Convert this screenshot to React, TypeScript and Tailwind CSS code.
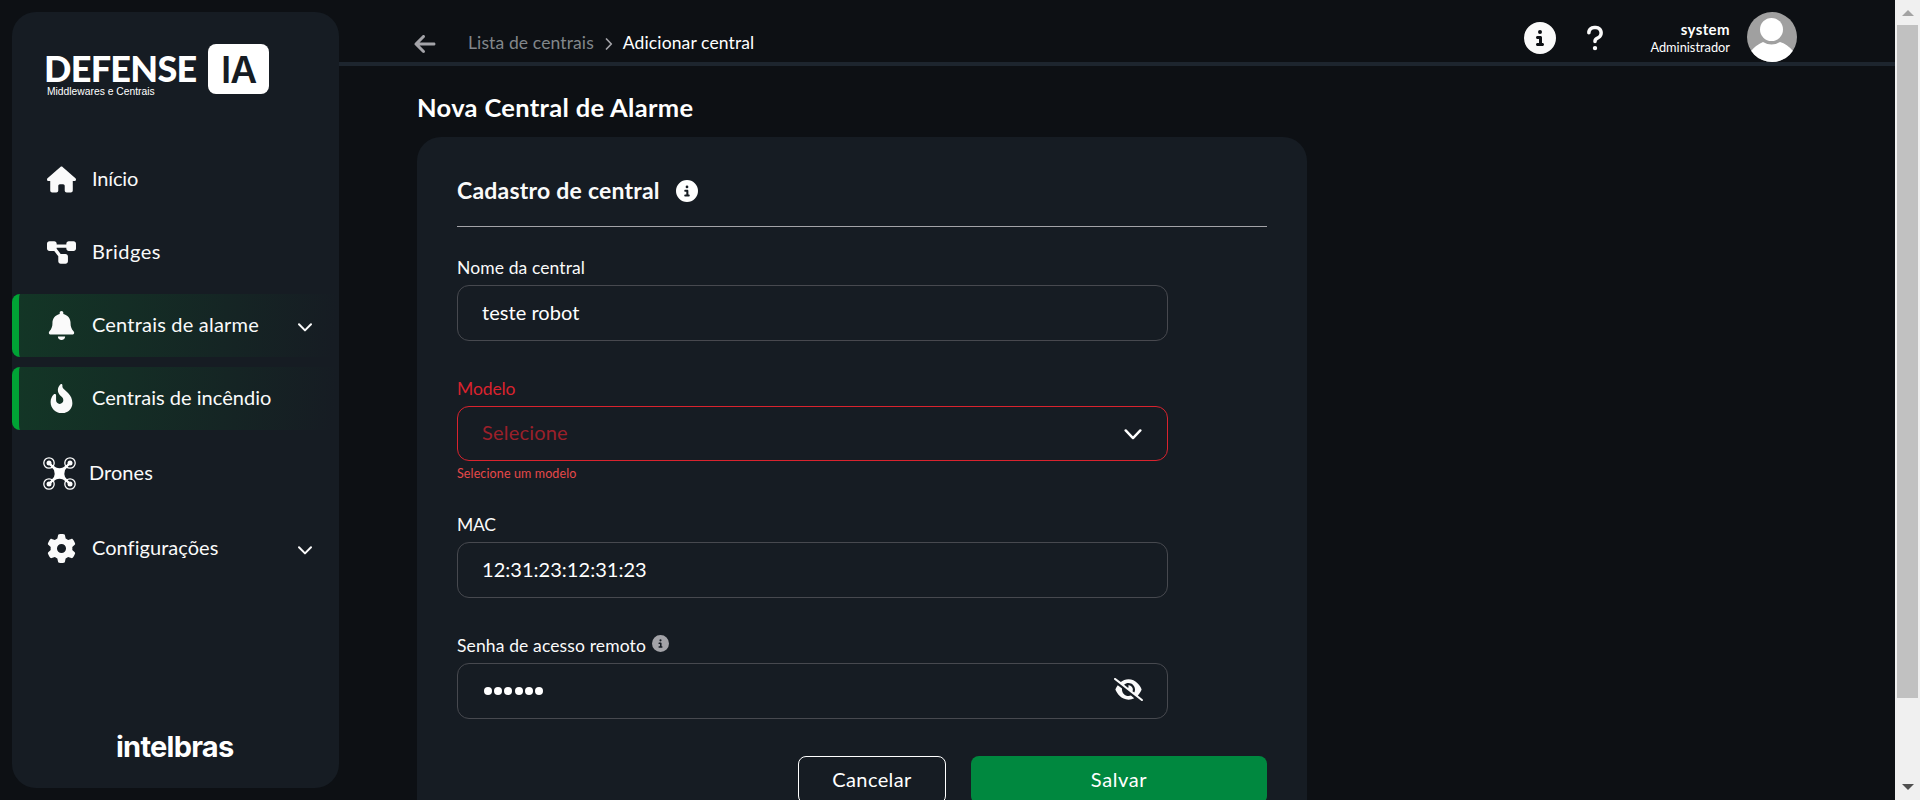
import React from "react";
import type { ReactNode } from "react";
import {
  FaHouse,
  FaDiagramProject,
  FaBell,
  FaFireFlameCurved,
  FaGear,
  FaCircleInfo,
  FaQuestion,
  FaArrowLeft,
  FaEyeSlash,
} from "react-icons/fa6";

function Chevron({ className }: { className: string }) {
  return (
    <svg viewBox="0 0 14 9" className={className} fill="none" stroke="currentColor" strokeLinecap="round" strokeLinejoin="round">
      <path d="M1 1.2 7 7.4 13 1.2" />
    </svg>
  );
}

function DroneIcon() {
  const rotors = [
    [6, 6],
    [27, 6],
    [6, 27],
    [27, 27],
  ];
  return (
    <svg viewBox="0 0 33 33" className="size-[33px] shrink-0">
      {rotors.map(([x, y]) => (
        <g key={`${x}-${y}`}>
          <circle cx={x} cy={y} r="5.2" fill="none" stroke="#fff" strokeWidth="1.3" />
          <circle cx={x} cy={y} r="2.5" fill="#fff" />
        </g>
      ))}
      <path d="M6 6 27 27M27 6 6 27" stroke="#fff" strokeWidth="2.2" />
      <path d="M8 7 13 10.5Q16.500 12 20 10.500L25 7 26 8 22 13Q20.800 16.500 22 20L26 25 25 26 20 22.500Q16.500 21 13 22.500L8 26 7 25 11 20Q12.200 16.500 11 13L7 8Z" fill="#fff" />
    </svg>
  );
}

function NavItem({ icon, children, active, expandable, className = "h-[63px]" }: { icon: ReactNode; children: ReactNode; active?: boolean; expandable?: boolean; className?: string }) {
  return (
    <a
      className={`flex shrink-0 items-center rounded-l-lg border-l-[7px] text-[20px] leading-6 ${
        active ? "border-[#00a335] bg-[linear-gradient(95deg,#133626_0%,#161c23_98%)]" : "border-transparent"
      } ${className}`}
    >
      {icon}
      <span className="pb-[3px]">{children}</span>
      {expandable && <Chevron className="mt-1 mr-[27px] ml-auto h-[9px] w-[14px] stroke-2" />}
    </a>
  );
}

function Sidebar() {
  return (
    <aside className="mt-3 ml-3 flex h-[776px] w-[327px] shrink-0 flex-col rounded-3xl bg-[#161c23] text-[#fafafa]">
      <div className="flex h-[136px] pt-8 pl-[35px]">
        <div className="flex w-[161px] flex-col">
          <span className="mt-[6px] -ml-[3px] text-[36px] leading-[36px] font-black tracking-[-0.7px] text-white">DEFENSE</span>
          <span className="font-['Liberation_Sans',sans-serif] text-[10.3px] leading-3 text-white">Middlewares e Centrais</span>
        </div>
        <div className="flex h-[50px] w-[61px] items-center justify-center rounded-lg bg-white font-['Inter',sans-serif] text-[37px] leading-none font-semibold tracking-[-1px] text-[#161c23]">IA</div>
      </div>
      <nav className="flex flex-col gap-[10px]">
        <NavItem icon={<FaHouse className="mr-4 ml-7 size-[29px]" />}><span className="tracking-[-0.15px]">Início</span></NavItem>
        <NavItem icon={<FaDiagramProject className="mr-4 ml-7 size-[29px]" />}><span className="tracking-[0.5px]">Bridges</span></NavItem>
        <NavItem active expandable icon={<FaBell className="mr-4 ml-7 size-[29px]" />}><span className="tracking-[0.2px]">Centrais de alarme</span></NavItem>
        <NavItem active icon={<FaFireFlameCurved className="mr-4 ml-7 size-[29px]" />}><span className="tracking-[0.03px]">Centrais de incêndio</span></NavItem>
        <NavItem className="h-[67px]" icon={<span className="mr-[13px] ml-6"><DroneIcon /></span>}><span className="tracking-[0.05px]">Drones</span></NavItem>
        <NavItem expandable icon={<FaGear className="mr-4 ml-7 size-[29px]" />}><span className="tracking-[0.04px]">Configurações</span></NavItem>
      </nav>
      <div className="mt-auto mb-[23px] pl-[104px] font-['Inter',sans-serif] text-[29px] leading-9 font-bold tracking-[-0.75px] text-white">intelbras</div>
    </aside>
  );
}

function Header() {
  return (
    <header className="flex h-[66px] shrink-0 items-start border-b-4 border-[#1d252e] pl-[74px]">
      <FaArrowLeft className="mt-[32px] size-[24px] text-[#a3a3a8]" />
      <span className="mt-[31px] ml-[31px] text-[17.5px] leading-6 tracking-[0.12px] text-[#82878b]">Lista de centrais</span>
      <svg viewBox="0 0 8 12" className="mt-[38px] ml-[11px] h-3 w-2" fill="none" stroke="#a3a3a8" strokeWidth="1.7" strokeLinecap="round" strokeLinejoin="round">
        <path d="M1.500 1 6.300 6 1.500 11" />
      </svg>
      <span className="mt-[31px] ml-[10px] text-[17.5px] leading-6 tracking-[0.12px] text-white">Adicionar central</span>
      <div className="mr-[98px] ml-auto flex items-start">
        <FaCircleInfo className="mt-[22px] size-8 text-[#fafafa]" />
        <FaQuestion className="mt-6 ml-[25px] size-7 text-[#fafafa]" />
        <div className="mt-[19px] ml-[40px] flex w-[81px] flex-col items-end text-white">
          <span className="text-[15px] leading-5 font-bold tracking-[0.4px]">system</span>
          <span className="text-[12.8px] leading-4">Administrador</span>
        </div>
        <svg viewBox="0 0 50 50" className="mt-3 ml-[17px] size-[50px] rounded-full bg-[#a0a0a0]">
          <circle cx="24.500" cy="17.500" r="11.500" fill="#fff" />
          <path d="M4 39Q9 33 16 30Q24.500 35 33 30Q40 32 46 39V50H4Z" fill="#fff" />
        </svg>
      </div>
    </header>
  );
}

function Field({ label, children, error, className = "h-14" }: { label: ReactNode; children: ReactNode; error?: string; className?: string }) {
  return (
    <div>
      <div className={`flex h-6 items-center text-[17.5px] leading-6 ${error ? "text-[#d9232e]" : "text-[#fafafa]"}`}>{label}</div>
      <div className={`mt-[5px] flex w-[711px] items-center rounded-xl border pr-6 pl-6 text-[20px] leading-6 ${error ? "border-[#d9232e]" : "border-[#47494f]"} ${className}`}>{children}</div>
      {error && <div className="mt-[5px] h-4 text-[12.5px] leading-4 tracking-[0.12px] text-[#e54849]">{error}</div>}
    </div>
  );
}

function ScrollBar() {
  return (
    <div className="flex h-[800px] w-[25px] shrink-0 flex-col items-center bg-[#f0f0f0]">
      <svg viewBox="0 0 12 6" className="mt-[10px] h-[6px] w-3 shrink-0"><path d="M0 6 6 0 12 6Z" fill="#a3a3a3" /></svg>
      <div className="mt-[9px] h-[673px] w-[21px] bg-[#c1c1c1]" />
      <svg viewBox="0 0 12 6" className="mt-auto mb-[10px] h-[6px] w-3 shrink-0"><path d="M0 0 6 6 12 0Z" fill="#505050" /></svg>
    </div>
  );
}

export default function App() {
  return (
    <div className="flex h-[800px] w-[1920px] overflow-hidden bg-[#0d1014] font-['Lato',sans-serif]">
      <Sidebar />
      <div className="flex min-w-0 flex-1 flex-col">
        <Header />
        <main className="flex flex-1 flex-col pl-[78px]">
          <h1 className="mt-[25px] text-[25.5px] leading-8 font-bold tracking-[0.32px] text-white">Nova Central de Alarme</h1>
          <section className="mt-[14px] h-[720px] w-[890px] shrink-0 rounded-t-3xl bg-[#161c23] px-10 pt-[39px]">
            <div className="flex h-[30px] items-center">
              <h2 className="pb-[2px] text-[23px] leading-7 font-bold tracking-[0.22px] text-[#fafafa]">Cadastro de central</h2>
              <FaCircleInfo className="ml-[16px] size-[22px] text-white" />
            </div>
            <div className="mt-5 h-px bg-[#a3a3a8]" />
            <div className="mt-[29px] flex flex-col">
              <Field label={<span className="tracking-[0.1px]">Nome da central</span>}>
                <span className="pb-[3px] tracking-[0.05px] text-white">teste robot</span>
              </Field>
              <div className="h-9" />
              <Field error="Selecione um modelo" className="h-[55px]" label={<span className="tracking-[-0.1px]">Modelo</span>}>
                <span className="pb-[3px] tracking-[0.2px] text-[#9b202a]">Selecione</span>
                <Chevron className="mt-[2px] mr-[1px] ml-auto h-[11px] w-[18px] stroke-2 text-white" />
              </Field>
              <div className="h-[31px]" />
              <Field label={<span className="tracking-[-0.2px]">MAC</span>}>
                <span className="pb-[3px] tracking-[0.03px] text-white">12:31:23:12:31:23</span>
              </Field>
              <div className="h-9" />
              <Field
                label={
                  <>
                    <span className="tracking-[0.13px]">Senha de acesso remoto</span>
                    <FaCircleInfo className="mb-[5px] ml-[6px] size-[17px] text-[#a3a3a8]" />
                  </>
                }
              >
                <span className="flex gap-[2.4px] pl-[1.500px]" role="img" aria-label="Senha">
                  {[0, 1, 2, 3, 4, 5].map((i) => (
                    <span key={i} className="size-2 rounded-full bg-white" />
                  ))}
                </span>
                <FaEyeSlash className="-mt-1 ml-auto size-[29px] text-[#fafafa]" />
              </Field>
            </div>
            <div className="mt-[37px] flex justify-end gap-[25px] text-[20px] leading-6 text-white">
              <button className="h-12 w-[148px] rounded-lg border border-white pb-[3px] tracking-[0.4px]">Cancelar</button>
              <button className="h-12 w-[296px] rounded-lg bg-[#00883f] pb-[3px] tracking-[0.6px]">Salvar</button>
            </div>
          </section>
        </main>
      </div>
      <ScrollBar />
    </div>
  );
}
